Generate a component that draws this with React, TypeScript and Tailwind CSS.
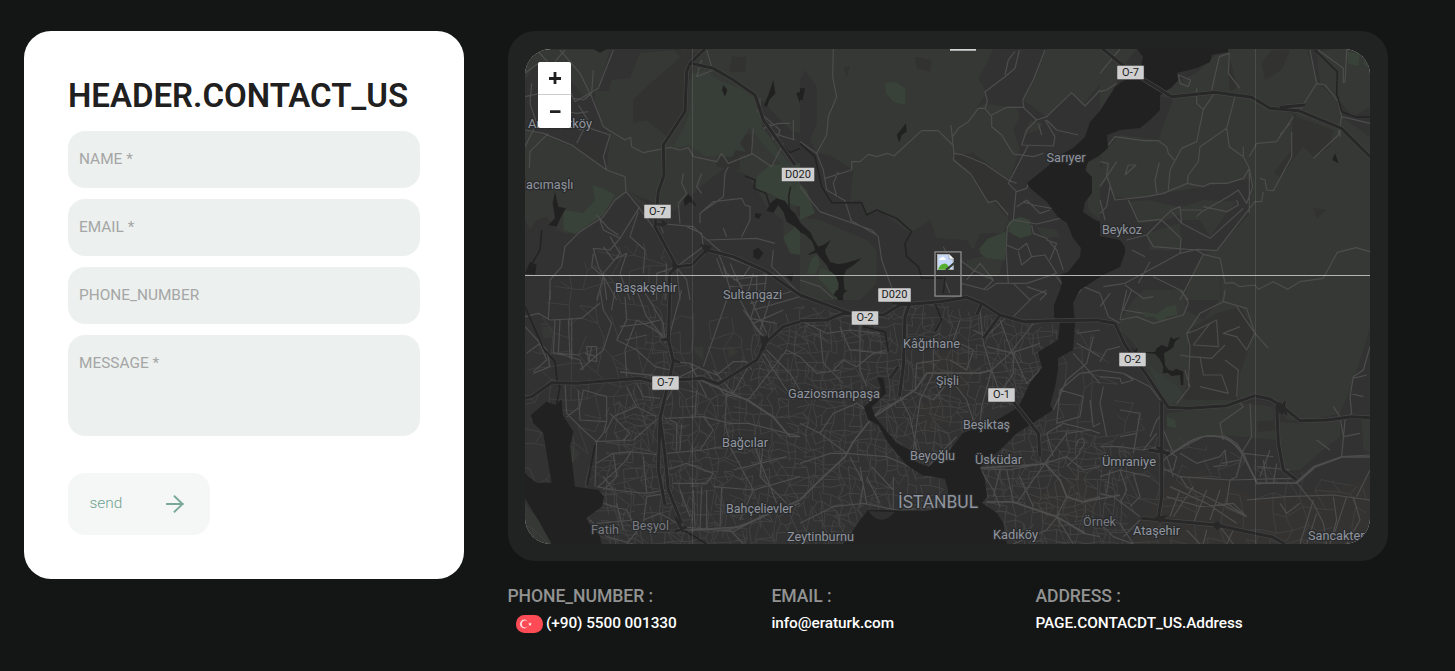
import React from 'react';

type Sheet = {
  x: number;
  y: number;
  woods: string[];
  clear: string[];
  parks: string[];
  ponds: string[];
  roads: string[];
  streams: string[];
  highways: string[];
};

const sheets: Sheet[] = [
  {
    x: 500, y: 20,
    woods: [
      'M75 330L130 345L230 385L320 450L375 470L378 512L470 570L475 500L492 465L485 375L555 270L560 150L575 87H900V340L870 330L780 235L765 290L790 330L850 380L890 430V600L870 620L800 560L765 500L740 465L680 440L600 500L540 560L470 600L378 512L345 545L290 590L240 640L190 640L160 620L140 590L110 600L90 630L75 600Z',
      'M285 210L325 215L335 180L390 175L420 100L560 87V270L485 375L492 560L378 512L375 470L320 450L330 345L300 300L285 240Z',
      'M75 90H330L300 190L260 240L210 180L170 120L110 130L75 180Z',
      'M850 560L900 590V700L850 670Z',
    ],
    clear: ['M400 240L440 200L510 140L540 110L520 87L600 100L560 200L550 270L500 350L440 300L400 310Z', 'M705 360L750 340L760 400L700 410Z', 'M695 110L740 110L735 155L690 155Z', 'M240 360L310 370L300 420L240 390Z', 'M650 400L720 410L720 450L650 440Z'],
    parks: ['M190 570L250 580L285 540L278 495L320 510L345 525L310 585L225 642L190 630Z', 'M770 470L810 435L900 430V560L850 545L810 520L770 510Z', 'M850 650L900 610V705L870 700Z'],
    ponds: ['M165 515L175 560L198 565L183 590L170 620L145 615L165 595L158 550Z', 'M670 195L682 210L675 230L666 210Z', 'M820 180L826 220L808 240L800 262L792 255L805 225Z', 'M550 540L565 522L575 535L590 560L570 545L555 558Z', 'M760 690L775 683L790 700L775 720L760 710Z', 'M75 760L90 725L110 735L105 765Z', 'M765 580L785 582L778 596L765 592Z', 'M280 87H320L300 98Z', 'M855 765L880 762L875 785Z', 'M889 220L900 215V250Z', 'M812 548L830 535L855 543L868 565L885 580L905 615V640L885 620L860 605L850 575L835 555L820 578L800 572Z'],
    roads: [
      'M75 160L115 130L180 150L225 245L295 205L340 90', 'M110 90L165 150L145 170', 'M165 125L195 90', 'M180 90L240 160L275 230L310 320L375 360L392 352L395 380L430 398L510 382L540 390L565 383L580 410L650 425L665 400L685 430L760 400',
      'M280 150L275 220L250 240L220 235', 'M75 330L130 340L215 375L320 450L375 470L378 515L345 540L310 590L240 635L195 680L185 740L150 780V840', 'M88 445L90 395L145 340', 'M320 450L310 410L330 345L255 320L230 370', 'M95 190L90 250L110 310L75 380', 'M75 230L120 220L180 270L230 280L265 275', 'M235 255L270 310L240 330L210 310',
      'M378 515L415 560L480 650L530 740L540 840', 'M300 600L310 630L360 655L410 575L420 560', 'M415 575L390 650L435 690L430 760', 'M290 585L325 625L355 645', 'M360 655L330 690L280 685L295 740L350 840', 'M280 700L275 740L310 770L290 840', 'M310 680L340 720L380 700L360 760L390 840', 'M330 650L360 700L310 760L320 840',
      'M550 460L545 490L560 520L535 550L540 610', 'M605 460L590 500L605 520', 'M600 610L600 580L640 545L725 535L735 555L750 560L750 600L725 650', 'M475 610L580 620L610 650L680 710L755 740L820 765', 'M490 640L480 610', 'M620 660L770 655L825 670', 'M680 650L670 625M560 620L605 640L610 680L530 740L470 760V840', 'M655 700L680 760L720 790L740 840', 'M500 730L495 840M520 730L560 780L570 840',
      'M780 235L780 280L820 340L885 360M790 325L835 310L870 310M770 270L840 330L830 360M810 310L820 360M880 300V360', 'M760 325L755 400L815 440L850 370', 'M605 120L590 170L640 150M620 90L635 140', 'M685 440L675 460L670 530L600 580', 'M650 715L670 770L730 770L750 740', 'M760 760L740 830M800 760L790 840', 'M820 690L815 740L900 820',
      'M670 740L700 840M690 730L740 840M700 780L820 760M690 800L800 790M770 765V840',
    ],
    streams: ['M125 630L120 690L85 750', 'M735 468L765 480L762 505L798 520L810 560', 'M830 355L870 398L900 385', 'M868 570L866 530L872 500'],
    highways: ['M615 87L570 130L560 155L555 275L490 375L492 465L475 515L465 620L530 740L510 760L505 840', 'M570 130L640 145L700 180L765 225L790 300L885 435', 'M465 610L485 615M530 740L575 735L620 690L700 710L800 755L900 825'],
  },
  {
    x: 800, y: 20,
    woods: ['M0 87H580L550 150L535 175L560 220L530 265L550 250L650 265L660 290L640 330L660 390L630 470L620 510L625 600L610 640L540 640L520 690L500 660L410 655L390 600L330 640L245 575L195 580L180 540L150 545L160 450L90 405L50 400L30 360L50 310V200L15 150L0 180Z', 'M740 87H900V190L850 255L810 220L740 290L670 240L700 190Z', 'M0 590L60 600L200 660L230 690L230 790L180 840H0Z', 'M860 430L900 410V600L865 570Z', 'M710 620L770 630L780 650L730 655Z', 'M500 720L580 700L610 715L600 760L560 780L500 740Z', 'M690 300L730 310L720 330L670 345Z'],
    clear: ['M345 110L395 120L390 155L350 145Z', 'M455 405L520 400L630 480L620 590L580 545L560 545L500 450Z', 'M130 140L150 140L140 170Z'],
    parks: ['M255 190L285 185L316 205V255L280 245L258 220Z', 'M625 605L660 590L690 600L695 645L660 655L625 635Z', 'M538 685L565 655L618 635L615 720L560 715L540 700Z', 'M0 490L20 510L45 580L0 600Z', 'M20 760L35 715L52 705L60 730L45 765Z', 'M60 745L100 755L115 790L110 840L80 800L55 775Z'],
    ponds: ['M0 608L15 622L32 638L42 660L55 680L70 675L92 660L75 690L78 702L90 726L115 733L140 728L185 715L160 736L138 750L130 775L134 810L125 840H112L116 790L106 765L88 752L82 738L62 715L50 698L20 706L46 690L37 665L17 645L0 636Z', 'M318 310L320 335L305 345L298 368L290 345Z', 'M0 205L15 205L8 240H0Z'],
    roads: ['M100 87L98 170L110 230L85 290L80 345L50 400L70 450L80 510L135 542L155 605', 'M50 400L0 365', 'M75 475L155 450L155 425L180 425L205 403L230 410L262 400L282 408L365 332H415L458 375', 'M115 455L100 490L110 530', 'M453 315L462 400L460 420L512 462L565 548L588 542L625 585', 'M462 400L490 405L555 432L625 480L650 490', 'M458 350L475 325L505 305L535 265L555 265L562 245L555 215L615 170L645 145L658 90', 'M645 95L625 120L615 165', 'M555 265L575 290L575 320L605 345L640 402L700 410L730 400', 'M575 285L620 262L670 262L710 300L740 290L815 218L855 258L880 232L900 210', 'M735 90L700 180L668 240L672 262', 'M710 300L680 330L665 375L760 378L765 350L735 300', 'M740 300L770 330L835 345M715 310L725 345', 'M685 375L625 490L650 515L680 505L685 490L720 470L740 445', 'M648 515L640 600L622 620L618 690L625 790', 'M650 560L680 540L720 580L750 570M670 545L700 555L755 565', 'M640 600L710 612L780 595', 'M695 615L700 640L740 655L770 690L790 750', 'M620 675L655 690L680 670L695 710L735 705L770 760', 'M655 695L665 735L695 710', 'M740 660L770 670L750 720', 'M0 500L35 545L60 575L215 630L235 650L245 720L285 830', 'M150 600L230 645', 'M480 720L520 750L580 780L550 810', 'M485 790L560 810L590 790L680 790L770 760', 'M430 680L440 700M430 770L450 820M500 780L540 730L580 780', 'M640 790L690 840M770 770L820 840L850 800L900 820', 'M680 800L740 820L720 840', 'M0 780L60 800L100 835'],
    streams: ['M0 370L45 410L65 500L95 548H185L200 585L230 570L290 595L335 635L315 670L320 710L355 740L365 775H435L430 820'],
    highways: [],
  },
  {
    x: 1100, y: 20,
    woods: ['M0 87H110L75 130L35 220L0 270Z', 'M180 230L240 180L290 160L340 110L385 87H620L655 190L710 240L725 290L810 350V840H365L360 715L310 700L350 690L450 580L455 480L500 440L580 380L590 280L510 265L455 235L340 215L220 235Z', 'M0 405L60 345L175 360L220 235L340 215L455 235L510 265L580 280L570 400L520 470L430 480L310 500L190 520L140 530L85 535L45 530L15 470Z', 'M85 545L140 540L280 570L200 600L120 610Z', 'M310 540L410 545L380 580L330 650L300 600L240 600L245 560Z', 'M140 640L240 610L240 690L150 690Z', 'M270 780L310 700L360 720V840H250Z', 'M700 87H810V260L760 290L715 240L660 190L650 95Z', 'M0 440H40L20 480L0 500Z'],
    clear: ['M515 90L570 90L545 150L495 180L485 130Z', 'M590 290L700 330L690 380L640 410L610 380L540 470L520 460L575 390Z', 'M385 90L410 200L390 215L385 160Z', 'M640 565L680 570L650 595Z'],
    parks: ['M738 95L780 100L775 138L745 132Z', 'M792 110L810 130V145L792 135Z'],
    ponds: ['M705 400L716 430L697 420Z'],
    roads: ['M0 160L60 87M0 215L20 210L50 190', 'M290 205V250L310 268L340 225', 'M335 210L358 110L388 100L385 160L420 205', 'M405 230L380 325L300 380L295 425L265 465L262 490', 'M310 268L290 365L245 385L210 450L205 510', 'M380 325L388 380L430 410L448 445V580', 'M25 375L45 350L130 362L175 362L200 380L205 400L222 420', 'M0 500L50 425M0 425L25 430L20 465L45 540L140 530L190 520L262 490L310 500L330 490L380 490L430 475L448 445', 'M178 428L165 480L170 520', 'M75 465L85 435L108 435L75 465', 'M448 410L470 370L530 365L580 290M570 310L540 345', 'M480 475L495 480L500 510L520 512L575 410V335', 'M430 380V410M448 445L458 500L440 550L415 510L385 530L305 575L290 590M310 560L380 575L415 555L410 540', 'M85 540L115 605L185 598L215 570L240 560L245 610L215 575', 'M245 610L330 655L430 565', 'M80 660L140 645L185 600L243 655L240 700L75 790L10 800', 'M140 645L160 680L290 690L310 703L360 715L375 790L400 788L420 800L465 795L475 808L520 785L563 808L600 785L670 775L712 697L768 683L810 695', 'M240 700L290 688L350 692L465 545L485 545L490 515', 'M95 690L135 710M150 725L115 790M75 795L130 835L160 830M160 770L240 810L265 840', 'M310 703L260 800L240 840', 'M240 570L305 570M630 90L650 190L675 195L715 245L725 290L810 310', 'M655 90L730 145V190M740 90L735 190', 'M650 190L600 270M725 290L715 345L640 415', 'M720 315V350M235 165L240 190L265 200L272 180Z', 'M0 540L15 600M0 580L20 560L30 500'],
    streams: ['M645 90L712 155L710 220L725 275L770 292L810 290'],
    highways: ['M0 80L55 125L130 178L215 230L345 217L455 232L510 265L595 272L725 325L810 410', 'M540 262L615 255'],
  },
  {
    x: 500, y: 290,
    woods: ['M125 110L160 110L155 145L130 145Z', 'M75 640L115 690L155 762H75Z', 'M210 460L240 490L215 525Z', 'M580 170L610 170L610 210L585 190Z', 'M685 165L718 185L685 205Z'],
    clear: [], parks: [],
    ponds: ['M92 375L140 335L165 345L185 328L188 375L220 425L210 470L225 590L295 600L312 620L305 650L258 685L275 710L300 740L305 762H155L115 690L90 650L75 625V548L85 560L110 578H155L145 520L130 430L100 400Z'],
    roads: ['M75 80L115 70L150 90L245 85L300 40', 'M150 0L145 85M165 90L160 190L190 195L240 210L250 240', 'M205 85L210 205M215 85L215 210M180 90L175 190L240 195', 'M300 0L310 60L335 100L310 180L240 240', 'M75 110L140 180L150 230L100 250', 'M80 190L120 160L140 210L100 245', 'M260 170H290V215L265 210ZM255 190L290 200M275 170L265 220', 'M345 0L335 60M375 20L380 90L350 150L410 180L465 230L510 240', 'M380 260L375 180L410 90L465 120L510 160', 'M410 0L440 80L490 140M430 0L490 100L495 160M360 110L440 100L480 90M375 150L440 135', 'M545 0L505 150L510 200', 'M680 30L610 230M720 30L770 120L800 150', 'M520 215L570 220L600 235L650 255L700 215L740 215L755 240', 'M600 230L540 260L500 330M620 245L670 310L745 330L820 380L870 440H900', 'M195 280L200 370L250 420L290 455L285 590', 'M235 300L240 390L320 395L310 430L290 455', 'M200 380L240 350L250 300L320 320V395', 'M285 455L400 450L480 380', 'M380 290L410 350L470 380M410 350L340 380L315 430M330 370L390 430L370 450M410 280L430 320L480 325', 'M290 520L340 490L390 485L480 495', 'M295 590L370 520L395 485M290 590L340 600L310 560M340 490L350 560L310 600', 'M340 600L435 610L500 600M440 610L430 500', 'M495 385L610 380L690 400L745 400L900 440', 'M590 300L585 380M680 310L675 400L690 460', 'M500 490L610 480L720 460L800 450', 'M510 390L530 400V480M545 400L540 480M610 380L640 420L600 480', 'M500 540L560 520L640 550L620 580L520 580', 'M550 720H680L740 700L830 660L900 640', 'M540 710L700 725L820 660', 'M620 600V720M665 590L660 710M580 600L585 710M605 590L600 720M540 600L570 680', 'M690 720L730 762M500 610L440 620L430 700L380 762', 'M430 690L480 670L530 700M310 640L380 660L410 720M350 640L370 720M290 700L400 690', 'M270 690L320 740L400 762', 'M750 40L890 0M760 60L900 20M750 85L830 100M780 0L750 90M820 0L780 120', 'M745 330L860 180L900 200M800 180L870 250L900 300M790 190L840 270L880 330', 'M570 220L620 320M640 240L700 310L750 220', 'M740 0L800 130M730 60L790 140M760 100L850 60M690 470L760 600L720 690M760 460L830 640M640 590L760 600L900 560M790 450L780 560L860 640M700 540L860 500'],
    streams: ['M75 50L130 175L165 215L172 280L180 290L170 340', 'M285 465L262 585', 'M550 720L620 762'],
    highways: ['M510 0L505 150L520 215L500 300L480 385L495 495L505 600L545 700', 'M75 325L95 320L155 278L230 280L420 265L460 275L530 270L610 265L655 282L770 210L800 155L850 110L900 95', 'M485 150L505 148M520 210L540 218M480 385L475 540L495 645', 'M780 190L800 140L790 180M525 680L550 725M560 710L525 725'],
  },
  {
    x: 800, y: 290,
    woods: [], clear: [], parks: [],
    ponds: [
      'M232 262L250 265L258 310L232 335L215 350L225 380L265 430L290 460L330 480L345 515L385 530L370 557L320 525L265 460L235 405L205 390L192 350L225 325L245 300Z',
      'M110 0H142L128 14L130 32L118 28L100 15Z',
    ],
    roads: ['M0 630L60 570L135 500L160 455L215 385L240 360L300 330L345 300L380 250H540L575 240', 'M0 700L100 650L190 640L300 662L400 650L440 615', 'M370 555L400 510L470 440', 'M280 560V662M200 560L240 640M215 530L280 600M180 530L200 640M150 500L190 580L180 650', 'M0 520L90 490L140 490L260 500L330 530', 'M0 400L60 430L140 490M60 430L100 370L170 340L215 370', 'M100 240L130 210L170 230L220 190L260 180', 'M0 200L50 250L120 240M180 100L180 240L200 290M120 110L150 180L260 190', 'M0 90L80 130L150 120L240 130M60 120L70 220L130 280', 'M300 320L330 380L350 480M330 300L400 330L450 270M400 240L400 140L420 130', 'M345 300L350 220L420 210M400 250L360 330L340 480M440 250L500 330L530 420', 'M450 210L500 240L520 180L460 150L480 90', 'M540 60L550 160L575 240L545 350L540 400M575 240L600 310', 'M620 80L560 140L520 120M640 80L700 20L740 0', 'M700 100L630 190L575 240M630 190L720 160M560 170L640 190L680 280L720 240', 'M600 90L640 200L640 250L600 310', 'M735 520L800 500L850 540L900 530', 'M540 535L620 540L735 520L780 570L800 620L850 635L900 620', 'M560 635H640L770 680L850 730L900 740', 'M540 535L580 600L600 650M600 540L580 620M620 540L640 635M660 560L700 650M735 520L650 640', 'M735 520L800 430L870 420L900 430M760 500L740 430L790 400L870 420', 'M770 400L780 300L840 250L900 240M760 360L800 270L860 220L880 140', 'M830 160L900 200M820 190L900 280M830 130L900 120M780 300L850 320L840 380L770 400', 'M780 670L740 720L640 762M770 680L820 762M800 620L770 680', 'M830 470C830 440 855 440 853 460S835 470 840 490L800 530', 'M870 330L880 410L900 400'],
    streams: ['M405 40L425 90L405 125', 'M190 110L255 125L265 185', 'M235 265L245 290L230 330'],
    highways: ['M0 92L80 90L130 70L250 75L300 45L420 35L500 22L545 40L600 75L670 95L760 92L900 90', 'M330 40L315 80L310 230L298 320', 'M275 40L330 40M295 230L270 265', 'M0 15L150 70M600 75L550 145M545 40L530 75', 'M640 335L715 430L720 500'],
  },
  {
    x: 1100, y: 290,
    woods: ['M100 30L130 0H250L260 60L310 90L380 0H810V110L790 180L750 300L720 370L640 390H560L530 340L465 315L380 345L210 350L160 280L100 160L60 120L60 90Z', 'M200 370L370 350L430 340L520 350L530 450L470 445L380 435L310 440L240 480L215 490L195 440Z', 'M540 395L600 400L720 385V440L680 470L600 540H550L535 460Z', 'M785 390L810 390V490L790 480Z'],
    clear: ['M265 120L350 70L420 50L445 90L460 130L420 250L410 330L330 330L250 330L265 260L265 180Z', 'M470 395L525 390L525 420L475 425Z'],
    parks: ['M130 65L170 72L200 50L228 45L232 75L200 80L185 98L160 80L135 80Z', 'M200 380L225 390L230 415L202 408Z'],
    ponds: ['M95 175L105 182L113 172L110 186L165 186L170 175L185 165L203 172L212 140L220 148L242 140L224 156L220 172L205 182L192 190L195 225L205 240L220 243L228 236L250 245V285L243 285L240 255L215 258L203 248L188 250L190 230L180 208L165 192L140 189H105Z'],
    roads: ['M0 10L25 80L60 100M80 0L60 90M0 50L30 10M95 0L70 60L130 70', 'M245 0L265 40L250 75L160 100L110 80L60 90', 'M375 0L370 35L300 70L260 130L270 170L265 290', 'M370 35L440 55L465 130L505 175', 'M350 90L355 170L280 165L330 100L350 90L290 120L260 130', 'M410 50L465 130L440 180L410 140L370 130L420 110', 'M270 200L335 205L375 165M300 200L310 255L365 255L385 310L300 290M375 210L415 240L410 320', 'M240 195L270 200M255 240L270 290L230 340', 'M0 240L70 250L100 270L65 280L60 265L0 260', 'M70 250L150 290L180 330M0 215L20 180L60 170', 'M10 290L0 340L20 440M60 360L120 370L110 430L60 440', 'M150 440L170 390L190 370M110 430L100 490M185 370L190 420L220 490', 'M0 470L60 470L130 480M200 500L250 470L310 440L375 438L410 460L430 490L470 580L590 580', 'M240 490L290 520L360 500L375 480L380 525L340 530M365 520L420 510', 'M180 530L240 560L390 570L580 565M240 560L260 590L440 680', 'M410 330L430 350L360 400L370 450M450 340L455 440L430 480', 'M430 480L410 560L390 570L380 640L440 680M440 680L400 640L300 650L200 620', 'M210 590L320 640L410 700M240 600L210 680M280 590L220 680M320 600L280 700M360 600L330 690', 'M580 565L640 640L670 700L680 762', 'M590 575L640 530L725 500L810 495', 'M440 630L560 620L700 615L810 630', 'M650 670L620 762M700 620L710 690L690 762M740 620L700 740M760 620L780 690L740 762M810 540L770 620', 'M540 640L560 670L600 640M640 630L600 762', 'M810 170L790 240L760 260L750 320L755 370L735 390L725 500', 'M760 265L800 255M750 310L790 320M720 380L730 440L780 430M650 450L690 480M700 350L720 380', 'M0 560L60 540L150 560M0 610L40 620L120 680M30 540L20 610M60 540L80 600L60 640M100 550L120 620L90 650', 'M0 700L40 740L100 762M60 700L100 762M120 690L70 740', 'M200 480L230 500L220 540L190 540M180 470L130 480L170 430', 'M480 560L510 480M470 530L570 540M500 580L490 510M520 580L530 520M430 490L520 500', 'M180 530L200 500L220 560M260 720L300 762M320 720L310 762M360 710L400 762M400 720L380 762'],
    streams: [],
    highways: ['M0 92L45 100L75 165L140 255L205 352L265 355L380 347L465 317L510 327L550 352L600 392L680 390L755 380L810 383', 'M185 335V620L175 685', 'M530 345L535 460L550 540L590 570', 'M125 685L240 695L350 705L440 725L515 740L555 762', 'M540 345L560 375M555 335L540 370M145 480L210 490M170 470L205 495'],
  },
];

const strait =
  'M1137 49L1143 57L1140 72L1120 83L1115 87L1100 111L1090 122L1085 137L1073 148L1057 157L1047 167L1027 183L1030 188L1047 202L1058 217L1067 223L1073 238L1081 248L1080 257L1068 272L1060 275L1062 282L1060 290L1054 305L1054 317L1060 323L1058 340L1038 352L1042 368L1030 383L1022 400L1017 408L997 420L963 433L950 450L928 467L923 475L945 479L948 490L948 500L943 507L927 511L880 510L868 510L860 520L850 535L843 544H1007L1003 523L997 513L982 503L987 497L985 480L980 467L1000 450L1017 433L1033 423L1053 410L1050 405L1055 387L1058 370L1058 358L1073 350L1075 323L1073 303L1080 290L1103 275L1120 267L1125 253L1125 247L1120 240L1100 236V222L1095 220L1083 212L1085 202L1092 193L1092 177L1085 170L1088 162L1100 155L1108 148L1107 135L1120 130L1140 128L1150 120L1160 110L1160 95L1172 87L1178 80L1177 73L1197 68L1210 62L1212 55L1228 52V49Z';

function cityStreets(x0: number, y0: number, cols: number, rows: number, cell: number, seedStart: number) {
  let seed = seedStart;
  const rnd = () => {
    seed = (seed * 16807) % 2147483647;
    return seed / 2147483647;
  };
  const pts: number[][][] = [];
  for (let r = 0; r <= rows; r++) {
    pts.push([]);
    for (let c = 0; c <= cols; c++) {
      pts[r].push([x0 + c * cell + (rnd() - 0.5) * cell * 0.8, y0 + r * cell + (rnd() - 0.5) * cell * 0.8]);
    }
  }
  let d = '';
  const seg = (a: number[], b: number[]) => {
    d += `M${a[0].toFixed(1)} ${a[1].toFixed(1)}L${b[0].toFixed(1)} ${b[1].toFixed(1)}`;
  };
  for (let r = 0; r < rows; r++) {
    for (let c = 0; c < cols; c++) {
      if (rnd() < 0.6) seg(pts[r][c], pts[r][c + 1]);
      if (rnd() < 0.7) seg(pts[r][c], pts[r + 1][c]);
      if (rnd() < 0.12) seg(pts[r][c], pts[r + 1][c + 1]);
    }
  }
  return d;
}

const denseStreets = cityStreets(590, 262, 60, 32, 9, 4711);
const sparseStreets = cityStreets(520, 240, 54, 20, 16, 991);

const places: [string, number, number, number, number?, string?][] = [
  ['Arnavutköy', 528, 128, 64],
  ['Hacımaşlı', 517, 189, 56.5],
  ['Başakşehir', 615, 292, 62],
  ['Sultangazi', 723, 298.5, 59],
  ['Sarıyer', 1046.5, 161.7, 39],
  ['Beykoz', 1102, 234.3, 40],
  ['Kâğıthane', 903, 347.6, 57],
  ['Şişli', 936, 385, 23],
  ['Gaziosmanpaşa', 788, 397.6, 92],
  ['Beşiktaş', 963, 429.3, 47],
  ['Beyoğlu', 910, 459.6, 45],
  ['Üsküdar', 975, 463.8, 47],
  ['Bağcılar', 722, 446.6, 46],
  ['Bahçelievler', 726, 513.4, 67],
  ['Zeytinburnu', 787, 541.4, 67],
  ['Kadıköy', 993, 539, 45],
  ['Ümraniye', 1102, 465.6, 54],
  ['Ataşehir', 1133, 534.9, 47],
  ['Sancaktepe', 1308, 540, 66],
  ['Beşyol', 632, 529.7, 37, 13, '#777a80'],
  ['Fatih', 591, 534, 28, 13, '#777a80'],
  ['Örnek', 1083, 526.4, 33, 13, '#777a80'],
  ['İSTANBUL', 898, 508.4, 80, 17.5, '#8f949e'],
];

const shields: [string, number, number][] = [
  ['O-7', 657.5, 211.5],
  ['O-7', 1130.5, 72.5],
  ['O-7', 665.5, 383],
  ['O-2', 865, 318],
  ['O-2', 1132.5, 359.5],
  ['O-1', 1001.5, 395],
  ['D020', 798, 174.5],
  ['D020', 894.5, 295],
];

const sheetTransform = (s: Sheet) => `translate(${s.x} ${s.y}) scale(0.33333)`;

function CityMap() {
  return (
    <svg viewBox="525 49 845 495" className="block h-[495px] w-[845px] rounded-[26px]" fill="none">
      <defs>
        <clipPath id="dense">
          <path d="M650 300L668 300L668 370L735 372L755 330L800 305L860 315L930 300L1000 320L1060 330L1030 400L960 420L1060 425L1130 445L1200 490L1250 480L1280 500L1300 544H600L602 490L605 410L640 385Z" />
        </clipPath>
        <clipPath id="sparse">
          <path d="M550 290L600 250L665 240L668 310L760 320L960 310L1090 330L1150 430L1370 490V544H525V380Z" />
        </clipPath>
      </defs>
      <rect x="525" y="49" width="845" height="495" fill="#323232" />
      <path d="M1160 490L1200 470L1260 500L1370 480V544H1130Z" fill="#343332" />
      <path d="M920 365L950 350L975 370L965 390L930 385ZM915 405L940 400L950 420L925 435ZM1030 500L1080 470L1100 510L1050 530Z" fill="#343331" />
      {sheets.map((s, i) => (
        <g key={i} transform={sheetTransform(s)}>
          <path d={s.woods.join('')} fill="#363835" />
          <path d={s.clear.join('')} fill="#323231" />
          <path d={s.parks.join('')} fill="#384238" />
        </g>
      ))}
      <path d="M692 74L705 70L718 80L740 88L755 98L760 115L763 128L752 135L750 127L740 143L746 152L736 150L732 157L705 156L697 150L688 145L672 149L684 128L690 110Z" fill="#373d37" />
      <path d="M752 130L768 150L782 165L795 190L800 175L778 150L764 128Z" fill="#373d37" />
      <path d="M1148 365L1162 375L1180 388L1182 395L1170 405L1160 392Z" fill="#363c38" />
      <path d={sparseStreets} stroke="#424242" strokeWidth="0.8" clipPath="url(#sparse)" />
      <path d={denseStreets} stroke="#464646" strokeWidth="0.8" clipPath="url(#dense)" />
      {sheets.map((s, i) => (
        <g key={i} transform={sheetTransform(s)} strokeLinejoin="round">
          <path d={s.roads.join('')} stroke="#4d4d4d" strokeWidth="3.6" />
        </g>
      ))}
      <path
        d="M800 500L820 480L845 457L853 442L872 418L900 400L915 390L927 373H980L992 370M620 372L700 380L747 400L773 417L790 437M800 500L740 527L690 530M980 468L1045 464L1060 480L1067 497L1083 502L1120 495M987 502H1013L1057 517L1085 533M1170 455C1185 444 1195 437 1207 436S1232 437 1243 455L1257 483H1297L1315 467L1342 457H1370"
        stroke="#4e4e4e"
        strokeWidth="1.7"
        strokeLinejoin="round"
      />
      <path d={strait} fill="#212121" />
      <path d="M868 511Q881 528 895 512Z" fill="#2f2f2f" />
      {sheets.map((s, i) => (
        <g key={i} transform={sheetTransform(s)} strokeLinejoin="round">
          <path d={s.ponds.join('')} fill="#212121" />
          <path d={s.streams.join('')} stroke="#232323" strokeWidth="4.5" />
          <path d={s.highways.join('')} stroke="#454545" strokeWidth="13" />
          <path d={s.highways.join('')} stroke="#282828" strokeWidth="9" />
        </g>
      ))}
      <path d="M662 220L668 224L661 227ZM700 244L712 246L706 254ZM672 262L680 266L673 272ZM760 335L768 338L763 352ZM1279 402L1286 406L1283 415L1276 410ZM1155 517L1168 515L1160 523ZM1212 525L1217 521L1223 526L1217 530Z" fill="#282828" />
      <path d="M692.5 49V544M1255.5 49V544" stroke="#fff" strokeOpacity="0.1" />
      <path d="M525 275.5H1370" stroke="#b4b5b4" />
      <path d="M950 49H976V50.8H950Z" fill="#d2d2d2" />
      <g fontFamily="Roboto, sans-serif">
        {places.map(([name, x, y, width, size = 13, color = '#8f949e']) => (
          <text
            key={name}
            x={x}
            y={y}
            fontSize={size}
            textLength={width}
            lengthAdjust="spacingAndGlyphs"
            fill={color}
            stroke="#2a2b2c"
            strokeWidth="2.5"
            strokeLinejoin="round"
            paintOrder="stroke"
          >
            {name}
          </text>
        ))}
        {shields.map(([name, cx, cy], i) => {
          const w = name.length > 3 ? 33 : 27;
          return (
            <g key={i}>
              <rect x={cx - w / 2} y={cy - 7} width={w} height="14" rx="1" fill="#cfcfcf" stroke="#3a3a3a" strokeWidth="0.5" />
              <text x={cx} y={cy + 3.2} fontSize="11" textAnchor="middle" fill="#202020">
                {name}
              </text>
            </g>
          );
        })}
      </g>
      <rect x="935" y="251.9" width="26" height="44.2" stroke="#8b8b8b" strokeWidth="1.3" />
      <g>
        <path d="M937 254H949L953.5 258.5V270H937Z" fill="#c5d8f7" />
        <path d="M937.5 254.5H949L953 258.5V269.5H937.5Z" stroke="#b4b4b4" />
        <path d="M949 254V259H954Z" fill="#fff" stroke="#999" strokeWidth="0.7" />
        <path d="M939 260Q939 258 941 258Q942 256 944 257Q946 258 945.5 260Z" fill="#fff" />
        <path d="M938 269.5Q940 263.5 945 263.5Q948 264 950 269.5Z" fill="#55b030" />
        <path d="M946 270L955 262.5" stroke="#353735" strokeWidth="2.2" />
      </g>
    </svg>
  );
}

function Field({ label }: { label: string }) {
  return (
    <input
      placeholder={label}
      className="block h-[57px] w-full rounded-[17px] bg-[#ecf0ee] px-[11px] pb-0.5 text-[15.4px] text-[#202020] outline-none placeholder:text-[#a5a6a5]"
    />
  );
}

function ContactForm() {
  return (
    <form className="h-[548px] w-[440px] rounded-[27px] bg-white px-11 pt-11">
      <h1 className="mb-2 h-12 text-[33px] leading-[42px] font-semibold whitespace-nowrap text-[#202020]">
        HEADER.CONTACT_US
      </h1>
      <div className="flex flex-col gap-[11px]">
        <Field label="NAME *" />
        <Field label="EMAIL *" />
        <Field label="PHONE_NUMBER" />
        <textarea
          placeholder="MESSAGE *"
          className="block h-[101px] w-full resize-none rounded-[17px] bg-[#ecf0ee] px-[11px] py-[19px] text-[15.4px] leading-[19px] outline-none placeholder:text-[#a5a6a5]"
        />
      </div>
      <button
        type="button"
        className="mt-[37px] flex h-[62px] w-[142px] items-center justify-between rounded-[17px] bg-[#f5f7f6] pr-[26px] pl-[21.5px] text-[15.4px] font-light text-[#6fa18e]"
      >
        <span>send</span>
        <svg viewBox="0 0 18 18" className="h-[18px] w-[18px]" fill="none" stroke="#7ba999" strokeWidth="1.9">
          <path d="M0.5 9H17M8.5 1.2L16.5 9L8.5 16.8" strokeLinecap="round" strokeLinejoin="round" />
        </svg>
      </button>
    </form>
  );
}

function Flag() {
  return (
    <svg viewBox="0 0 27 18" className="h-[18px] w-[27px]">
      <rect width="27" height="18" rx="8.5" fill="#ff4b55" />
      <circle cx="8.3" cy="9" r="4.4" fill="#fff" fillOpacity="0.8" />
      <circle cx="9.5" cy="9" r="3.6" fill="#ff4b55" />
      <path d="M14 7.3L14.5 8.5L15.8 8.7L14.8 9.5L15 10.8L14 10L12.8 10.6L13.2 9.4L12.3 8.5L13.5 8.5Z" fill="#fff" />
    </svg>
  );
}

function Detail({ title, children }: { title: string; children: React.ReactNode }) {
  return (
    <div className="w-[264px] whitespace-nowrap">
      <h2 className="h-[27px] text-[17.6px] leading-[27px] font-medium tracking-[-0.07px] text-[#929392]">{title}</h2>
      <div className="flex h-[27px] items-center text-[15.4px] leading-[27px] font-medium tracking-[-0.07px] text-white">
        {children}
      </div>
    </div>
  );
}

export default function App() {
  return (
    <main className="flex h-[671px] w-[1455px] gap-11 overflow-hidden bg-[#141615] pt-[31px] pl-6 font-['Roboto',sans-serif]">
      <ContactForm />
      <section className="w-[880px]">
        <div className="relative h-[530px] w-[880px] rounded-[27px] bg-[#212322] pt-[18px] pl-[17px]">
          <div className="h-[495px] w-[845px] overflow-hidden rounded-[26px] bg-[#ddd]">
            <CityMap />
          </div>
          <div className="absolute top-[31px] left-[30px] flex w-[33px] flex-col overflow-hidden rounded-[2px] bg-white text-[#202020]">
            <button type="button" aria-label="Zoom in" className="flex h-[33px] items-center justify-center border-b border-[#ccc]">
              <svg viewBox="0 0 12 12" className="h-3 w-3" stroke="currentColor" strokeWidth="2.8">
                <path d="M0 6.5H12M6 0V12" />
              </svg>
            </button>
            <button type="button" aria-label="Zoom out" className="flex h-[33px] items-center justify-center">
              <svg viewBox="0 0 12 12" className="h-3 w-3" stroke="currentColor" strokeWidth="2.8">
                <path d="M1 5.7H11.5" />
              </svg>
            </button>
          </div>
        </div>
        <div className="mt-[22px] -ml-[0.6px] flex">
          <Detail title="PHONE_NUMBER :">
            <span className="mr-[3px] ml-[8.6px]">
              <Flag />
            </span>
            (+90) 5500 001330
          </Detail>
          <Detail title="EMAIL :">info@eraturk.com</Detail>
          <Detail title="ADDRESS :">PAGE.CONTACDT_US.Address</Detail>
        </div>
      </section>
    </main>
  );
}
